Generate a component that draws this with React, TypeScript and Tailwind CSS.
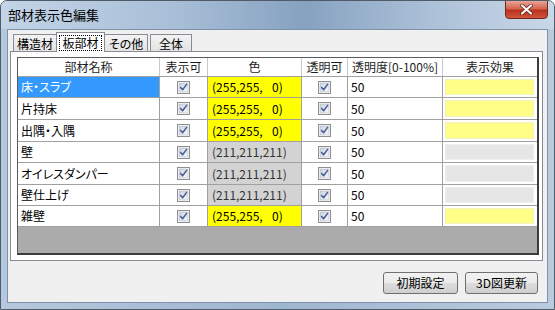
import React from 'react';

type Row = { name: string; yellow: boolean; selected?: boolean; h: string };

const rows: Row[] = [
  { name: '床・スラブ', yellow: true, selected: true, h: 'h-[21px]' },
  { name: '片持床', yellow: true, h: 'h-[22px]' },
  { name: '出隅・入隅', yellow: true, h: 'h-[22px]' },
  { name: '壁', yellow: false, h: 'h-[21px]' },
  { name: 'オイレスダンパー', yellow: false, h: 'h-[22px]' },
  { name: '壁仕上げ', yellow: false, h: 'h-[21px]' },
  { name: '雑壁', yellow: true, h: 'h-[21px]' },
];

function Check() {
  return (
    <svg width="13" height="13" viewBox="0 0 13 13">
      <defs>
        <linearGradient id="cbg" x1="0" y1="0" x2="1" y2="1">
          <stop offset="0" stopColor="#cbd3df" />
          <stop offset="1" stopColor="#f6f8fb" />
        </linearGradient>
      </defs>
      <rect x="0.5" y="0.5" width="12" height="12" fill="#fff" stroke="#8e8f8f" />
      <rect x="2" y="2" width="9" height="9" fill="url(#cbg)" stroke="#aeb6c4" strokeWidth="0.6" />
      <path d="M3.6 6.4 L5.6 8.8 L9.6 3.4" fill="none" stroke="#4a5d96" strokeWidth="1.5" strokeLinecap="round" strokeLinejoin="round" />
    </svg>
  );
}

function Tab({ label, active, w }: { label: string; active?: boolean; w: string }) {
  if (active) {
    return (
      <div className={`relative z-10 -mx-px h-[20px] ${w} border border-b-0 border-[#898c95] bg-white flex items-start justify-center pt-[2px]`}>
        <span className="border border-dotted border-black px-[2px] leading-[14px]">{label}</span>
      </div>
    );
  }
  return (
    <div className={`h-[18px] ${w} border border-b-0 border-[#898c95] bg-[linear-gradient(#f3f3f3,#e2e2e2)] flex items-center justify-center leading-[14px]`}>
      {label}
    </div>
  );
}

export default function App() {
  return (
    <div className="w-[555px] h-[310px] overflow-hidden rounded-t-[7px] border border-[#4f5b68] bg-[linear-gradient(90deg,#b5c8dd,#9fb6cf_50%,#b9cbdf)] font-['Noto_Sans_CJK_JP','Noto_Sans',sans-serif] text-[12px] text-black [font-feature-settings:'palt']">
      <div className="relative h-[28px] bg-[linear-gradient(90deg,#c3d4e7,#aac0d8_30%,#86a2c1_55%,#a8bdd5_75%,#c9d8e8)] flex items-center pl-[7px]">
        <span className="text-[13px] leading-none -mt-[2px]">部材表示色編集</span>
        <div className="absolute right-[6px] top-[-1px] w-[43px] h-[19px] rounded-b-[4px] border border-[#6b2a22] bg-[linear-gradient(#e9a596,#d2654f_45%,#b8321d_55%,#d0553c)] flex items-center justify-center">
          <svg width="13" height="11" viewBox="0 0 13 11">
            <path d="M2 1.5 L11 9.5 M11 1.5 L2 9.5" stroke="#5a1c14" strokeWidth="3.6" strokeLinecap="round" />
            <path d="M2 1.5 L11 9.5 M11 1.5 L2 9.5" stroke="#ffffff" strokeWidth="2.2" strokeLinecap="round" />
          </svg>
        </div>
      </div>

      <div className="mx-[6px] h-[274px] border border-[#7d91a8] bg-[#f0f0f0] flex flex-col px-[2px] pt-[2px]">
        <div className="flex items-end h-[20px] pl-[3px]">
          <Tab label="構造材" w="w-[44px]" />
          <Tab label="板部材" active w="w-[49px]" />
          <Tab label="その他" w="w-[44px]" />
          <div className="w-[2px]" />
          <Tab label="全体" w="w-[42px]" />
        </div>

        <div className="-mt-px w-[533px] h-[210px] border border-[#898c95] bg-white pl-[6px] pt-[5px] pb-[5px]">
          <div className="w-[522px] h-full border-l border-t border-[#5a5a5a] border-r-2 border-b-2 border-r-[#3c3c3c] border-b-[#3c3c3c] flex flex-col bg-[#ababab]">
            <div className="h-[19px] flex bg-white border-b border-[#a0a0a0] text-[#1e1e1e] leading-[18px]">
              <div className="w-[142px] text-center border-r border-[#c9c9c9]">部材名称</div>
              <div className="w-[48px] text-center border-r border-[#c9c9c9]">表示可</div>
              <div className="w-[94px] text-center border-r border-[#c9c9c9]">色</div>
              <div className="w-[46px] text-center border-r border-[#c9c9c9]">透明可</div>
              <div className="w-[95px] text-center border-r border-[#c9c9c9]">透明度[0-100%]</div>
              <div className="w-[94px] text-center">表示効果</div>
            </div>
            {rows.map((r) => (
              <div key={r.name} className={`${r.h} flex bg-white border-b border-[#a0a0a0]`}>
                <div className={`w-[142px] border-r border-[#a0a0a0] flex items-center pl-[3px] ${r.selected ? 'bg-[#3399ff] text-white' : ''}`}>
                  {r.name}
                </div>
                <div className="w-[48px] border-r border-[#a0a0a0] flex items-center justify-center">
                  <Check />
                </div>
                <div className={`w-[94px] border-r border-[#a0a0a0] flex items-center pl-[4px] ${r.yellow ? 'bg-[#ffff00]' : 'bg-[#d3d3d3] text-[#333]'}`}>
                  <span className="whitespace-pre">{r.yellow ? '(255,255,\u2007 0)' : '(211,211,211)'}</span>
                </div>
                <div className="w-[46px] border-r border-[#a0a0a0] flex items-center justify-center">
                  <Check />
                </div>
                <div className="w-[95px] border-r border-[#a0a0a0] flex items-center pl-[3px]">50</div>
                <div className="w-[94px] p-[2px] pr-[3px]">
                  <div className={`h-full border ${r.yellow ? 'bg-[#ffff88] border-[#f3f3c0]' : 'bg-[#e6e6e6] border-[#efefef]'}`} />
                </div>
              </div>
            ))}
            <div className="flex-1" />
          </div>
        </div>

        <div className="mt-[11px] flex justify-end gap-[7px] pr-[7px]">
          <button className="w-[75px] h-[22px] rounded-[3px] border border-[#707070] bg-[linear-gradient(#f2f2f2,#ebebeb_50%,#dddddd_50%,#cfcfcf)] text-[12px] leading-none">初期設定</button>
          <button className="w-[73px] h-[22px] rounded-[3px] border border-[#707070] bg-[linear-gradient(#f2f2f2,#ebebeb_50%,#dddddd_50%,#cfcfcf)] text-[12px] leading-none">3D図更新</button>
        </div>
      </div>
    </div>
  );
}
